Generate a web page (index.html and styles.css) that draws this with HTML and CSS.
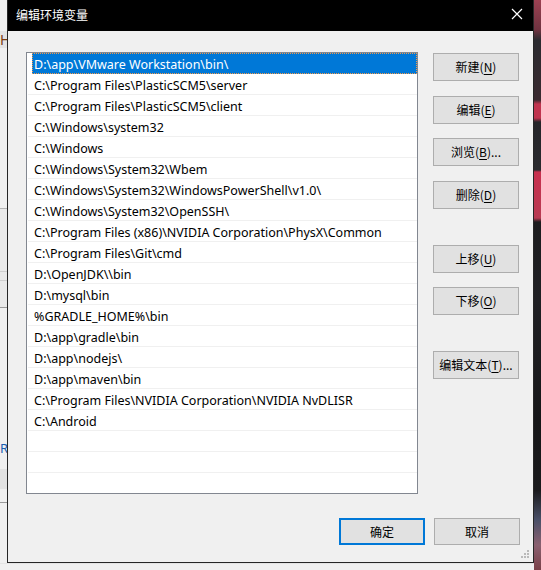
FILE: index.html
```html
<!DOCTYPE html>
<html lang="zh-CN">
<head>
  <meta charset="UTF-8" />
  <meta name="viewport" content="width=device-width, initial-scale=1.0" />
  <title>编辑环境变量</title>
  <link rel="stylesheet" href="styles.css">
</head>
<body>

  <div class="screen">
    <!-- window behind the dialog, only its right edge shows -->
    <div class="behind">
      <div class="behind-tab">H</div>
      <div class="behind-panel"></div>
      <div class="behind-row"></div>
      <div class="behind-row tall"></div>
      <div class="behind-label">R(</div>
      <div class="behind-band"></div>
    </div>

    <div class="dialog">
      <div class="titlebar">
        <span class="title">编辑环境变量</span>
        <svg class="close" width="12" height="12" viewBox="0 0 12 12">
          <path d="M1 1 L11 11 M11 1 L1 11" stroke="#fff" stroke-width="1.2" fill="none" />
        </svg>
      </div>

      <div class="content">
        <div class="main">
          <div class="pathlist">
            <div class="row selected">D:\app\VMware Workstation\bin\</div>
            <div class="row">C:\Program Files\PlasticSCM5\server</div>
            <div class="row">C:\Program Files\PlasticSCM5\client</div>
            <div class="row">C:\Windows\system32</div>
            <div class="row">C:\Windows</div>
            <div class="row">C:\Windows\System32\Wbem</div>
            <div class="row">C:\Windows\System32\WindowsPowerShell\v1.0\</div>
            <div class="row">C:\Windows\System32\OpenSSH\</div>
            <div class="row">C:\Program Files (x86)\NVIDIA Corporation\PhysX\Common</div>
            <div class="row">C:\Program Files\Git\cmd</div>
            <div class="row">D:\OpenJDK\\bin</div>
            <div class="row">D:\mysql\bin</div>
            <div class="row">%GRADLE_HOME%\bin</div>
            <div class="row">D:\app\gradle\bin</div>
            <div class="row">D:\app\nodejs\</div>
            <div class="row">D:\app\maven\bin</div>
            <div class="row">C:\Program Files\NVIDIA Corporation\NVIDIA NvDLISR</div>
            <div class="row">C:\Android</div>
            <div class="row"></div>
            <div class="row"></div>
            <div class="row last"></div>
          </div>

          <div class="actions">
            <button class="btn">新建(<u>N</u>)</button>
            <button class="btn wide">编辑(<u>E</u>)</button>
            <button class="btn">浏览(<u>B</u>)...</button>
            <button class="btn wide">删除(<u>D</u>)</button>
            <button class="btn group">上移(<u>U</u>)</button>
            <button class="btn">下移(<u>O</u>)</button>
            <button class="btn group">编辑文本(<u>T</u>)...</button>
          </div>
        </div>

        <div class="footer">
          <button class="btn primary">确定</button>
          <button class="btn">取消</button>
        </div>
      </div>

      <svg class="grip" width="9" height="9" viewBox="0 0 9 9">
        <rect x="6" y="0" width="2" height="2" fill="#b9b9b9" />
        <rect x="3" y="3" width="2" height="2" fill="#b9b9b9" />
        <rect x="6" y="3" width="2" height="2" fill="#b9b9b9" />
        <rect x="0" y="6" width="2" height="2" fill="#b9b9b9" />
        <rect x="3" y="6" width="2" height="2" fill="#b9b9b9" />
        <rect x="6" y="6" width="2" height="2" fill="#b9b9b9" />
      </svg>
    </div>

    <div class="desktop"></div>
    <div class="behind-bottom"></div>
  </div>

</body>
</html>
```

FILE: styles.css
```css
* {
  box-sizing: border-box;
}

body {
  margin: 0;
  padding: 0;
  font-family: "Noto Sans", "Noto Sans CJK SC", sans-serif;
  font-size: 12px;
  color: #000;
  background-color: #f0f0f0;
}

.screen {
  width: 541px;
  height: 570px;
  display: grid;
  grid-template-columns: 7px 527px 7px;
  grid-template-rows: 563px 7px;
  overflow: hidden;
}

/* window behind */
.behind {
  grid-column: 1;
  grid-row: 1 / 3;
  background-color: #f0f0f0;
  overflow: hidden;
  display: flex;
  flex-direction: column;
}

.behind-tab {
  height: 17px;
  margin-top: 31px;
  background-color: #e3e3e3;
  color: #7a3b10;
  font-size: 14px;
  line-height: 17px;
  padding-left: 0;
}

.behind-panel {
  height: 63px;
  margin-top: 160px;
  border-top: 1px solid #b5b5b5;
  background-color: #e9e9e9;
}

.behind-row {
  height: 9px;
  border-top: 1px solid #cfcfcf;
  background-color: #e9e9e9;
}

.behind-row.tall {
  height: 28px;
  border-bottom: 1px solid #9a9a9a;
}

.behind-label {
  margin-top: 132px;
  color: #1c5fb0;
  font-size: 13px;
  line-height: 16px;
  white-space: nowrap;
}

.behind-band {
  height: 34px;
  margin-top: 13px;
  background: linear-gradient(#e2e2e2 0 20px, #f0f0f0 20px 33px, #9a9a9a 33px);
}

.behind-bottom {
  grid-column: 1 / 3;
  grid-row: 2;
  background-color: #f0f0f0;
  border-top: 1px solid #e4e4e4;
}

.desktop {
  grid-column: 3;
  grid-row: 1 / 3;
  background: linear-gradient(
    #9c4152 0px, #6e3340 30px, #2b2b30 40px, #3a2a30 100px,
    #c0344f 104px, #c0344f 118px, #252529 122px, #2a2a2e 170px,
    #c8304e 172px, #b83a52 218px, #1c1c1e 222px, #202024 300px,
    #161618 420px, #1a1a1c 490px, #4a5068 520px, #8a6070 545px, #7a4048 570px
  );
}

/* dialog */
.dialog {
  grid-column: 2;
  grid-row: 1;
  position: relative;
  display: flex;
  flex-direction: column;
  background-color: #f0f0f0;
  border: 1px solid #262626;
  border-top: none;
}

.titlebar {
  height: 31px;
  background-color: #000;
  color: #fff;
  display: flex;
  align-items: center;
  justify-content: space-between;
  padding: 0 10px 2px 8px;
  font-family: "Noto Sans CJK SC", sans-serif;
  font-size: 12px;
}

.close {
  margin-top: -1px;
}

.content {
  padding: 21px 13px 0 18px;
}

.main {
  display: flex;
  gap: 15px;
}

.pathlist {
  width: 392px;
  height: 442px;
  background-color: #fff;
  border: 1px solid #828790;
  overflow: hidden;
}

.row {
  height: 21px;
  margin-left: 1px;
  padding: 1px 0 0 6px;
  border-bottom: 1px solid #f0f0f0;
  font-size: 12.5px;
  line-height: 21px;
  white-space: nowrap;
}

.row.selected {
  margin-left: 5px;
  padding: 1px 0 0 1px;
  background-color: #0078d7;
  color: #fff;
  border: 1px dotted #f29a4a;
  line-height: 19px;
}

.row.last {
  border-bottom: none;
}

.actions {
  width: 86px;
  padding-top: 1px;
  display: flex;
  flex-direction: column;
  gap: 14px;
}

.btn {
  width: 86px;
  height: 28px;
  padding: 0 0 1px;
  font-family: "Noto Sans CJK SC", sans-serif;
  font-size: 12px;
  color: #000;
  background-color: #e1e1e1;
  border: 1px solid #adadad;
  border-radius: 0;
}

.btn.wide {
  margin-top: 1px;
}

.btn.group {
  margin-top: 22px;
}

.btn u {
  text-underline-offset: 2px;
}

.footer {
  display: flex;
  justify-content: flex-end;
  gap: 9px;
  margin-top: 24px;
}

.footer .btn {
  height: 27px;
}

.btn.primary {
  border: 2px solid #0078d7;
}

.grip {
  position: absolute;
  right: 3px;
  bottom: 3px;
}
```
